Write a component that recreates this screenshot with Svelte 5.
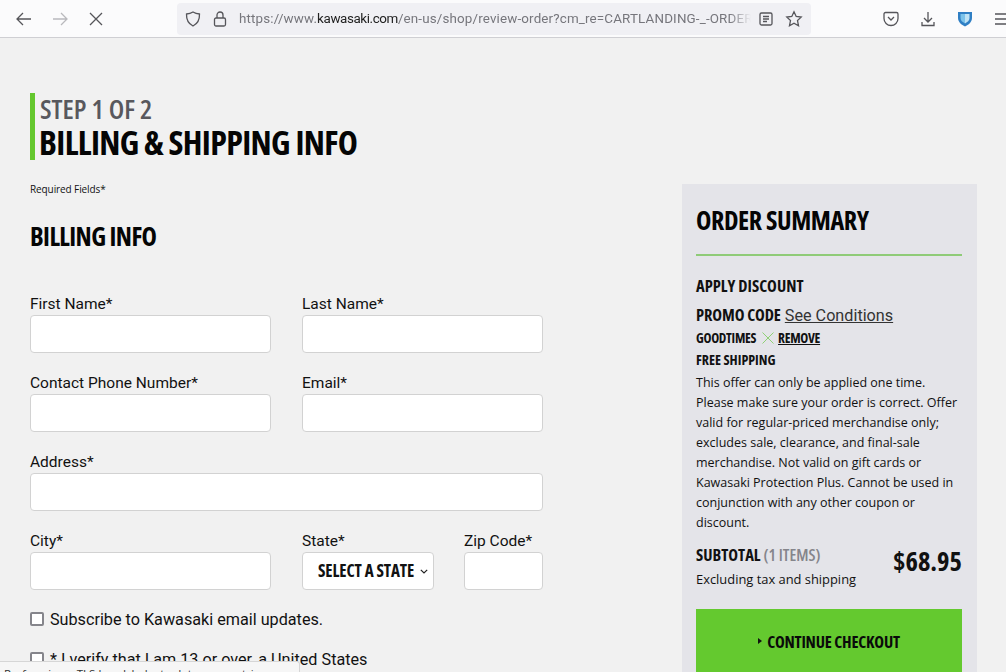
<script>
  let subscribe = false;
  let verify = false;
</script>

<div class="window">
  <header class="toolbar">
    <div class="nav">
      <svg width="18" height="18" viewBox="0 0 18 18" class="ic"><path d="M16 9H2M8 3 2 9l6 6" /></svg>
      <svg width="18" height="18" viewBox="0 0 18 18" class="ic dim"><path d="M2 9h14M10 3l6 6-6 6" /></svg>
      <svg width="18" height="18" viewBox="0 0 18 18" class="ic"><path d="M3 3l12 12M15 3 3 15" /></svg>
    </div>
    <div class="urlbar">
      <svg width="18" height="18" viewBox="0 0 18 18" class="ic"><path d="M9 2c2 1.200 4 1.800 6.500 2 .2 5.500-1.500 9.500-6.500 12C4 13.500 2.300 9.500 2.500 4 5 3.800 7 3.200 9 2z" /></svg>
      <svg width="16" height="18" viewBox="0 0 16 18" class="ic lock"><rect x="2.500" y="8" width="11" height="8" rx="1.500" /><path d="M5 8V5a3 3 0 0 1 6 0v3" /></svg>
      <span class="url">https://www.<b>kawasaki.com</b>/en-us/shop/review-order?cm_re=CARTLANDING-_-ORDER</span>
      <svg width="16" height="16" viewBox="0 0 16 16" class="ic reader"><rect x="2" y="2" width="12" height="12" rx="1.500" /><path d="M5 5.500h6M5 8h6M5 10.500h4" /></svg>
      <svg width="18" height="18" viewBox="0 0 18 18" class="ic star"><path d="M9 1.800l2.200 4.700 5 .6-3.700 3.500 1 5.100L9 13.200l-4.500 2.500 1-5.100L1.800 7.100l5-.6z" /></svg>
    </div>
    <div class="tools">
      <svg width="18" height="18" viewBox="0 0 18 18" class="ic"><path d="M3.500 2.500h11A1.500 1.500 0 0 1 16 4v4.500a7 7 0 0 1-14 0V4a1.500 1.500 0 0 1 1.500-1.500z" /><path d="M6 7l3 3 3-3" /></svg>
      <svg width="18" height="18" viewBox="0 0 18 18" class="ic"><path d="M9 2v10M5 8l4 4 4-4M3 12v3.500h12V12" /></svg>
      <svg width="18" height="18" viewBox="0 0 18 18" class="shield"><path d="M2 2h14v6c0 4-3.500 7-7 8.500C5.500 15 2 12 2 8z" fill="#2f7fc4" /><path d="M9 4h4.500v4c0 2.500-2 4-4.500 5.500z" fill="#bfe3f5" /><path d="M9 4H4.500v4c0 2.500 2 4 4.500 5.500z" fill="#7cc3ea" /></svg>
      <svg width="18" height="18" viewBox="0 0 18 18" class="ic"><path d="M2 4h14M2 9h14M2 14h14" /></svg>
    </div>
  </header>

  <main class="page">
    <section class="checkout">
      <div class="step">
        <p class="step-no">STEP 1 OF 2</p>
        <h1>BILLING &amp; SHIPPING INFO</h1>
      </div>
      <p class="required">Required Fields*</p>
      <h2>BILLING INFO</h2>

      <form class="fields">
        <label class="half">First Name*<input type="text" /></label>
        <label class="half">Last Name*<input type="text" /></label>
        <label class="half">Contact Phone Number*<input type="text" /></label>
        <label class="half">Email*<input type="text" /></label>
        <label class="full">Address*<input type="text" /></label>
        <label class="half">City*<input type="text" /></label>
        <div class="state-zip">
          <label class="state">State*
            <span class="select">SELECT A STATE
              <svg width="8" height="5" viewBox="0 0 8 5"><path d="M.8.800 4 4 7.200.8" /></svg>
            </span>
          </label>
          <label class="zip">Zip Code*<input type="text" /></label>
        </div>
      </form>

      <label class="check first"><input type="checkbox" bind:checked={subscribe} />Subscribe to Kawasaki email updates.</label>
      <label class="check"><input type="checkbox" bind:checked={verify} />* I verify that I am 13 or over, a United States</label>
    </section>

    <aside class="summary">
      <h3>ORDER SUMMARY</h3>
      <h4>APPLY DISCOUNT</h4>
      <p class="promo"><span>PROMO CODE</span> <a href="#conditions">See Conditions</a></p>
      <p class="code">
        <span>GOODTIMES</span>
        <svg width="14" height="14" viewBox="0 0 14 14"><path d="M1.500 1.500l11 11M12.500 1.500l-11 11" /></svg>
        <a href="#remove">REMOVE</a>
      </p>
      <p class="code-name">FREE SHIPPING</p>
      <p class="terms">This offer can only be applied one time. Please make sure your order is correct. Offer valid for regular-priced merchandise only; excludes sale, clearance, and final-sale merchandise. Not valid on gift cards or Kawasaki Protection Plus. Cannot be used in conjunction with any other coupon or discount.</p>
      <div class="totals">
        <div>
          <p class="subtotal">SUBTOTAL <span>(1 ITEMS)</span></p>
          <p class="excl">Excluding tax and shipping</p>
        </div>
        <p class="price">$68.95</p>
      </div>
      <button type="button" class="cta"><i></i>CONTINUE CHECKOUT</button>
    </aside>
  </main>

  <div class="status">Performing a TLS handshake to data.coremetrics.com</div>
</div>

<style>
  :global(body) {
    margin: 0;
    background: #f1f1f1;
  }

  .window {
    position: relative;
    height: 672px;
    overflow: hidden;
    font-family: "Open Sans", sans-serif;
    color: #111;
  }

  .toolbar {
    display: flex;
    align-items: center;
    height: 37px;
    overflow: hidden;
    background: #fbfbfc;
    border-bottom: 1px solid #cfcfd3;
  }

  .ic {
    fill: none;
    stroke: #55555a;
    stroke-width: 1.300;
    flex: none;
  }

  .dim {
    stroke: #b9b9bd;
  }

  .nav {
    display: flex;
    flex: none;
    gap: 18px;
    width: 177px;
    padding-left: 15px;
    box-sizing: border-box;
  }

  .urlbar {
    display: flex;
    flex: none;
    align-items: center;
    width: 634px;
    height: 32px;
    padding-left: 7px;
    box-sizing: border-box;
    background: #f0f0f4;
    border-radius: 4px;
  }

  .lock {
    margin-left: 10px;
  }

  .url {
    width: 512px;
    margin-left: 11px;
    overflow: hidden;
    white-space: nowrap;
    font-family: "Roboto", sans-serif;
    font-size: 13.400px;
    letter-spacing: 0.150px;
    color: #76767c;
    mask-image: linear-gradient(to right, #000 490px, transparent 512px);
  }

  .url b {
    font-weight: 400;
    letter-spacing: -0.400px;
    color: #222;
  }

  .reader {
    margin-left: 7px;
  }

  .star {
    margin-left: 11px;
  }

  .tools {
    display: flex;
    flex: none;
    gap: 19px;
    margin-left: 71px;
  }

  .shield {
    flex: none;
  }

  .page {
    display: flex;
    align-items: flex-start;
    padding: 55px 29px 0 30px;
  }

  .checkout {
    width: 513px;
  }

  .summary {
    width: 266px;
    margin: 91px 0 0 139px;
    padding: 19px 15px 40px 14px;
    background: #e4e4e9;
  }

  .step {
    height: 67px;
    padding-left: 5px;
    border-left: 5px solid #64c72e;
  }

  .step-no,
  h1,
  h2,
  h3,
  h4,
  .promo span,
  .code span,
  .code a,
  .code-name,
  .subtotal,
  .price,
  .cta,
  .select {
    font-family: "Open Sans", sans-serif;
    font-stretch: 75%;
    font-weight: 700;
  }

  .step-no {
    margin: 0;
    font-size: 27.300px;
    line-height: 32px;
    font-weight: 600;
    color: #58585d;
  }

  h1 {
    margin: 0 0 0 -1px;
    font-size: 34px;
    line-height: 35px;
    letter-spacing: -0.650px;
    color: #050505;
  }

  .required {
    margin: 22px 0 0;
    font-size: 10px;
    line-height: 14px;
    letter-spacing: -0.100px;
  }

  h2 {
    margin: 23px 0 0;
    font-size: 26px;
    line-height: 34px;
    letter-spacing: -0.600px;
    color: #050505;
  }

  .fields {
    display: flex;
    flex-wrap: wrap;
    gap: 17px 31px;
    margin-top: 38px;
  }

  label {
    display: block;
    padding-top: 1px;
    font-family: "Roboto", sans-serif;
    font-size: 15.500px;
    line-height: 24px;
  }

  .half {
    width: 241px;
  }

  .full {
    width: 513px;
  }

  input[type="text"],
  .select {
    display: flex;
    width: 100%;
    height: 38px;
    margin-top: -1px;
    box-sizing: border-box;
    background: #fff;
    border: 1px solid #d2d2d2;
    border-radius: 4px;
  }

  .state-zip {
    display: flex;
    gap: 30px;
    width: 241px;
  }

  .state {
    width: 132px;
    white-space: nowrap;
  }

  .zip {
    width: 79px;
    white-space: nowrap;
  }

  .select {
    align-items: center;
    justify-content: space-between;
    padding: 0 5px 0 15px;
    font-size: 17px;
    letter-spacing: -0.100px;
  }

  .select svg {
    fill: none;
    stroke: #222;
    stroke-width: 1.200;
  }

  .check {
    display: flex;
    align-items: center;
    gap: 6px;
    margin-top: 16px;
    padding-top: 0;
    font-size: 16.200px;
    white-space: nowrap;
  }

  .first {
    margin-top: 18px;
  }

  .check input {
    width: 14px;
    height: 14px;
    margin: -2px 0 0;
    appearance: none;
    background: #fff;
    border: 2px solid #85858b;
    border-radius: 2px;
    box-sizing: border-box;
  }

  h3 {
    margin: 0;
    padding-bottom: 17px;
    font-size: 26px;
    line-height: 34px;
    letter-spacing: -0.400px;
    color: #050505;
    border-bottom: 2px solid #8fcb78;
  }

  h4 {
    margin: 18px 0 0;
    font-size: 16.500px;
    line-height: 24px;
  }

  .promo {
    display: flex;
    gap: 4px;
    align-items: baseline;
    margin: 5px 0 0;
    line-height: 24px;
  }

  .promo span {
    font-size: 16.500px;
    letter-spacing: -0.100px;
  }

  .promo a {
    font-family: "Roboto", sans-serif;
    font-size: 16.200px;
    color: #333;
  }

  .code {
    display: flex;
    align-items: center;
    margin: 0;
    line-height: 20px;
    font-size: 13.500px;
    letter-spacing: -0.300px;
  }

  .code svg {
    margin: 0 3px 0 5px;
    fill: none;
    stroke: #8fd076;
    stroke-width: 1;
  }

  .code a {
    color: #111;
  }

  .code-name {
    margin: 2px 0 0;
    font-size: 14px;
    line-height: 20px;
  }

  .terms {
    margin: 3px 0 0;
    font-size: 12.500px;
    line-height: 20px;
  }

  .totals {
    display: flex;
    justify-content: space-between;
    align-items: flex-start;
    margin-top: 10px;
  }

  .subtotal {
    margin: 0;
    font-size: 16.500px;
    line-height: 24px;
  }

  .subtotal span {
    font-weight: 600;
    color: #85858b;
  }

  .excl {
    margin: 3px 0 0;
    font-size: 12.900px;
    line-height: 18px;
  }

  .price {
    margin: 0;
    font-size: 26.500px;
    line-height: 36px;
  }

  .cta {
    display: flex;
    align-items: center;
    justify-content: center;
    gap: 5px;
    width: 100%;
    height: 64px;
    margin-top: 21px;
    padding: 0;
    background: #64c92f;
    border: 0;
    font-size: 16.500px;
    letter-spacing: -0.200px;
    color: #0a0a0a;
  }

  .cta i {
    width: 0;
    height: 0;
    border-left: 4px solid #111;
    border-top: 3px solid transparent;
    border-bottom: 3px solid transparent;
  }

  .status {
    position: absolute;
    left: 0;
    bottom: 0;
    width: 300px;
    height: 11px;
    padding: 5px 0 0 4px;
    box-sizing: border-box;
    overflow: hidden;
    background: #f6f6f6;
    border-top: 1px solid #d6d6d6;
    border-right: 1px solid #d6d6d6;
    border-top-right-radius: 3px;
    font-size: 11.500px;
    line-height: 14px;
    white-space: nowrap;
    color: #333;
  }
</style>
